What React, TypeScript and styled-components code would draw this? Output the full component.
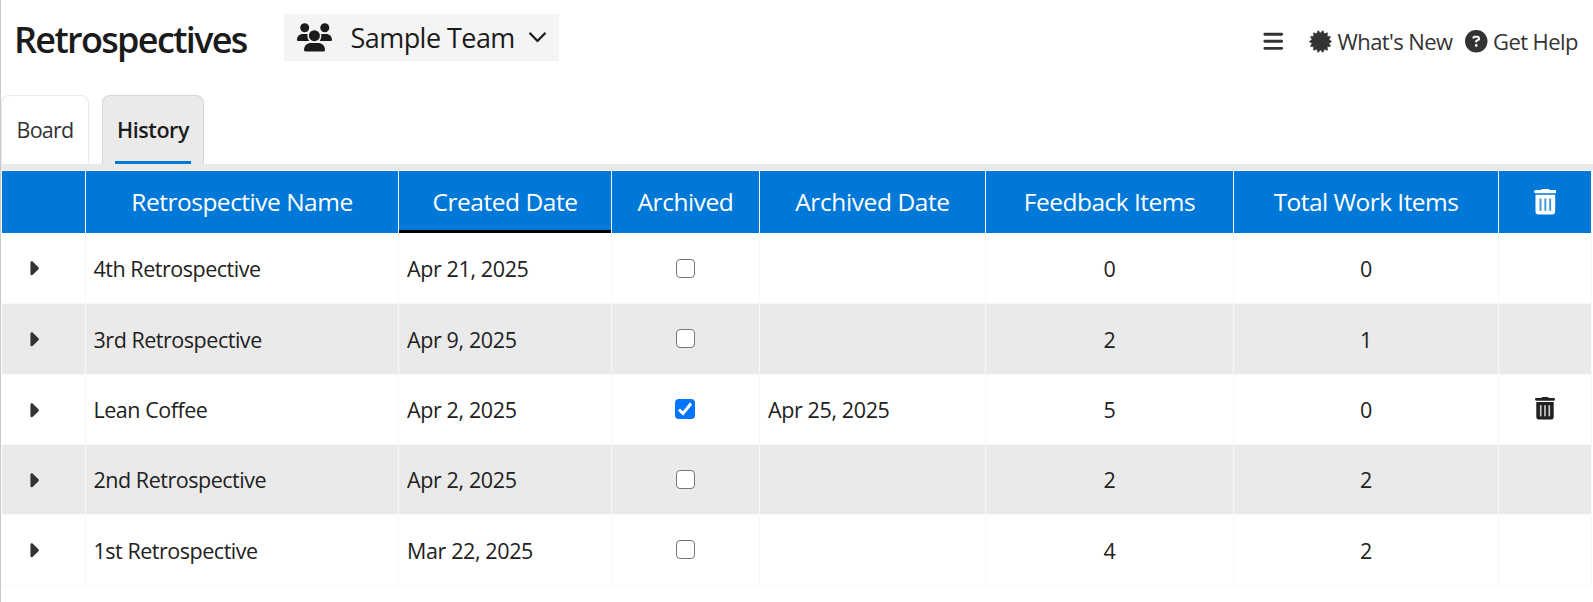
import React from "react";
import styled, { createGlobalStyle } from "styled-components";
import { FaBars, FaCircleQuestion, FaCaretRight } from "react-icons/fa6";

const GlobalStyle = createGlobalStyle`
  *, *::before, *::after { box-sizing: border-box; }
  body { margin: 0; background: #fff; }
`;

const Page = styled.main`
  width: 1593px;
  height: 602px;
  overflow: hidden;
  padding-left: 1px;
  border-left: 1px solid #c8c8c8;
  display: flex;
  flex-direction: column;
  font-family: "Open Sans", "Noto Sans", sans-serif;
  font-size: 21.5px;
  letter-spacing: -0.38px;
  color: #212121;
`;

const Header = styled.header`
  height: 95px;
  display: flex;
  align-items: flex-start;
  padding-left: 12px;
`;

const Title = styled.h1`
  margin: 15px 0 0;
  width: 270px;
  font-size: 36px;
  line-height: 50px;
  font-weight: 600;
  letter-spacing: -1.65px;
  color: #1b1b1b;
`;

const TeamButton = styled.button`
  margin-top: 14px;
  width: 275px;
  height: 47px;
  padding: 0 0 0 13px;
  border: 0;
  background: #f4f4f4;
  color: #1b1b1b;
  display: flex;
  align-items: center;
  font-family: inherit;
  font-size: 27px;
  letter-spacing: -0.55px;
`;

const TeamName = styled.span`
  width: 178px;
  margin-left: 18.5px;
  text-align: left;
  line-height: 47px;
`;

const Actions = styled.nav`
  margin-left: auto;
  padding: 30px 14px 0 0;
  display: flex;
  align-items: center;
  color: #333;
`;

const Action = styled.a<{ $gap?: number; $width: number }>`
  display: flex;
  align-items: center;
  gap: 5.5px;
  height: 23px;
  width: ${(p) => p.$width}px;
  margin-left: ${(p) => p.$gap ?? 0}px;
  font-size: 22px;
  line-height: 23px;
  letter-spacing: -0.58px;
  white-space: nowrap;
  svg { flex: none; }
`;

const Tabs = styled.div`
  height: 75px;
  display: flex;
  gap: 13px;
  border-bottom: 6px solid #eaeaea;
  margin-left: -1px;
`;

const Tab = styled.button<{ $active?: boolean }>`
  width: ${(p) => (p.$active ? 102 : 88)}px;
  height: 69px;
  padding: 0 12px;
  display: flex;
  border: 1px solid ${(p) => (p.$active ? "#d6d6d6" : "#eaeaea")};
  border-bottom: 0;
  border-radius: 8px 8px 0 0;
  background: ${(p) => (p.$active ? "#eaeaea" : "#fff")};
  color: ${(p) => (p.$active ? "#1b1b1b" : "#333")};
  font-family: inherit;
  font-size: 21.5px;
  font-weight: ${(p) => (p.$active ? 600 : 400)};
  letter-spacing: ${(p) => (p.$active ? -0.4 : -0.75)}px;
  white-space: nowrap;
`;

const TabLabel = styled.span<{ $active?: boolean }>`
  flex: 1;
  height: 68px;
  line-height: 67px;
  border-bottom: 3px solid ${(p) => (p.$active ? "#0078d7" : "transparent")};
`;

const Table = styled.div`
  width: 1590px;
  border-top: 1px solid #f8f8f8;
`;

const Row = styled.div<{ $height: number; $shaded?: boolean }>`
  display: grid;
  grid-template-columns: 84px 313px 213px 148px 226px 248px 265px 93px;
  height: ${(p) => p.$height}px;
  background: ${(p) => (p.$shaded ? "#eaeaea" : "#fff")};
`;

const HeadCell = styled.div<{ $sorted?: boolean; $tracking?: number }>`
  display: flex;
  align-items: center;
  justify-content: center;
  background: #0078d7;
  background-clip: padding-box;
  border-right: 1px solid #f8f8f8;
  box-shadow: ${(p) => (p.$sorted ? "inset 0 -3px #000" : "none")};
  color: #fff;
  font-size: 24.5px;
  font-weight: 430;
  letter-spacing: ${(p) => p.$tracking ?? -0.5}px;
  line-height: 62px;
`;

const Cell = styled.div<{ $center?: boolean }>`
  display: flex;
  align-items: center;
  justify-content: ${(p) => (p.$center ? "center" : "flex-start")};
  padding-left: ${(p) => (p.$center ? 0 : 8)}px;
  padding-top: 0.6px;
  border-right: 1px solid #f8f8f8;
  border-bottom: 1px solid #f8f8f8;
`;

const ExpandCell = styled(Cell)`
  padding: 0.8px 0 0 20px;
  color: #333;
`;

const NameCell = styled(Cell)`
  padding-left: 7.5px;
  letter-spacing: -0.47px;
`;

const CheckCell = styled(Cell)<{ $first: boolean }>`
  padding: ${(p) => (p.$first ? "0.6px 0.4px 0 0" : "0 0.4px 1px 0")};
`;

const DeleteCell = styled(Cell)`
  padding: 0 0.6px 2.4px 0;
`;

const Checkbox = styled.span<{ $checked: boolean }>`
  width: ${(p) => (p.$checked ? 20 : 19)}px;
  height: ${(p) => (p.$checked ? 20 : 19)}px;
  border-radius: 4px;
  border: ${(p) => (p.$checked ? 0 : "1.5px solid #767676")};
  background: ${(p) => (p.$checked ? "#0075ff" : "#fff")};
  display: flex;
`;

const TrashIcon = ({ size }: { size: number }) => (
  <svg width={(size * 20) / 22.5} height={size} viewBox="0 0 20 22.5" fill="currentColor">
    <path d="M6.2 0.9Q6.6 0 7.6 0H12.4Q13.4 0 13.8 0.9H18.7Q20 0.9 20 2.3T18.7 3.7H1.3Q0 3.7 0 2.3T1.3 0.9Z" />
    <path d="M4.9 8.3H15.1V19.2H4.9Z" fillOpacity="0.25" />
    <path fillRule="evenodd" d="M1.3 5H18.7V19.7Q18.7 22.5 15.9 22.5H4.1Q1.3 22.5 1.3 19.7ZM4.9 8.3V19.2H6.6V8.3ZM9.15 8.3V19.2H10.85V8.3ZM13.4 8.3V19.2H15.1V8.3Z" />
  </svg>
);

const TeamIcon = () => (
  <svg width="35" height="29" viewBox="0 0 35 29" fill="currentColor">
    <circle cx="7.7" cy="4.7" r="4.5" />
    <circle cx="27.8" cy="4.7" r="4.5" />
    <path d="M0 17C0 13 2.6 10.9 5.6 10.9H10.6C10.2 13.8 10.8 16 12.2 18H1Q0 18 0 17Z" />
    <path d="M35 17C35 13 32.4 10.9 29.4 10.9H24.2C24.6 13.8 24 16 22.6 18H34Q35 18 35 17Z" />
    <circle cx="17.4" cy="12.7" r="5.5" />
    <path d="M7 27C7 22.2 10.4 19.9 14 19.9H21C24.6 19.9 28 22.2 28 27Q28 28.4 26.8 28.4H8.2Q7 28.4 7 27Z" />
  </svg>
);

const badgePoints = Array.from({ length: 28 }, (_, i) => {
  const angle = (i * Math.PI) / 14;
  const radius = i % 2 === 0 ? 11.2 : 8.6;
  return `${(11.5 + radius * Math.cos(angle)).toFixed(2)},${(11.5 + radius * Math.sin(angle)).toFixed(2)}`;
}).join(" ");

const BadgeIcon = () => (
  <svg width="23" height="23" viewBox="0 0 23 23" fill="currentColor" stroke="currentColor" strokeWidth="0.6" strokeLinejoin="round">
    <polygon points={badgePoints} />
  </svg>
);

const headings = [
  { label: "" },
  { label: "Retrospective Name" },
  { label: "Created Date", tracking: -0.45 },
  { label: "Archived", tracking: -0.45 },
  { label: "Archived Date", tracking: -0.4 },
  { label: "Feedback Items" },
  { label: "Total Work Items", tracking: -0.55 },
];

const retrospectives = [
  { name: "4th Retrospective", created: "Apr 21, 2025", archived: "", feedback: 0, work: 0, height: 71 },
  { name: "3rd Retrospective", created: "Apr 9, 2025", archived: "", feedback: 2, work: 1, height: 71 },
  { name: "Lean Coffee", created: "Apr 2, 2025", archived: "Apr 25, 2025", feedback: 5, work: 0, height: 70 },
  { name: "2nd Retrospective", created: "Apr 2, 2025", archived: "", feedback: 2, work: 2, height: 70 },
  { name: "1st Retrospective", created: "Mar 22, 2025", archived: "", feedback: 4, work: 2, height: 71 },
];

export default function App() {
  return (
    <>
      <GlobalStyle />
      <Page>
        <Header>
          <Title>Retrospectives</Title>
          <TeamButton>
            <TeamIcon />
            <TeamName>Sample Team</TeamName>
            <svg width="17" height="11" viewBox="0 0 17 11" fill="none" stroke="currentColor" strokeWidth="2.3" strokeLinecap="round" strokeLinejoin="round">
              <path d="M1.2 1.5L8.5 9L15.8 1.5" />
            </svg>
          </TeamButton>
          <Actions>
            <Action $width={20}><FaBars size={22.5} /></Action>
            <Action $gap={27.5} $width={142}><BadgeIcon />What's New</Action>
            <Action $gap={14} $width={114}><FaCircleQuestion size={22.5} />Get Help</Action>
          </Actions>
        </Header>
        <Tabs>
          <Tab><TabLabel>Board</TabLabel></Tab>
          <Tab $active><TabLabel $active>History</TabLabel></Tab>
        </Tabs>
        <Table>
          <Row $height={62}>
            {headings.map((h) => (
              <HeadCell key={h.label} $sorted={h.label === "Created Date"} $tracking={h.tracking}>{h.label}</HeadCell>
            ))}
            <HeadCell><TrashIcon size={25.5} /></HeadCell>
          </Row>
          {retrospectives.map((r, i) => (
            <Row key={r.name} $height={r.height} $shaded={i % 2 === 1}>
              <ExpandCell><FaCaretRight size={22.5} /></ExpandCell>
              <NameCell>{r.name}</NameCell>
              <Cell>{r.created}</Cell>
              <CheckCell $center $first={i === 0}>
                <Checkbox $checked={!!r.archived}>
                  {r.archived && (
                    <svg width="20" height="20" viewBox="0 0 20 20" fill="none" stroke="#fff" strokeWidth="3">
                      <path d="M4 10.5L8 14.5L16 4.5" />
                    </svg>
                  )}
                </Checkbox>
              </CheckCell>
              <Cell>{r.archived}</Cell>
              <Cell $center>{r.feedback}</Cell>
              <Cell $center>{r.work}</Cell>
              <DeleteCell $center>{r.archived && <TrashIcon size={22.5} />}</DeleteCell>
            </Row>
          ))}
        </Table>
      </Page>
    </>
  );
}
